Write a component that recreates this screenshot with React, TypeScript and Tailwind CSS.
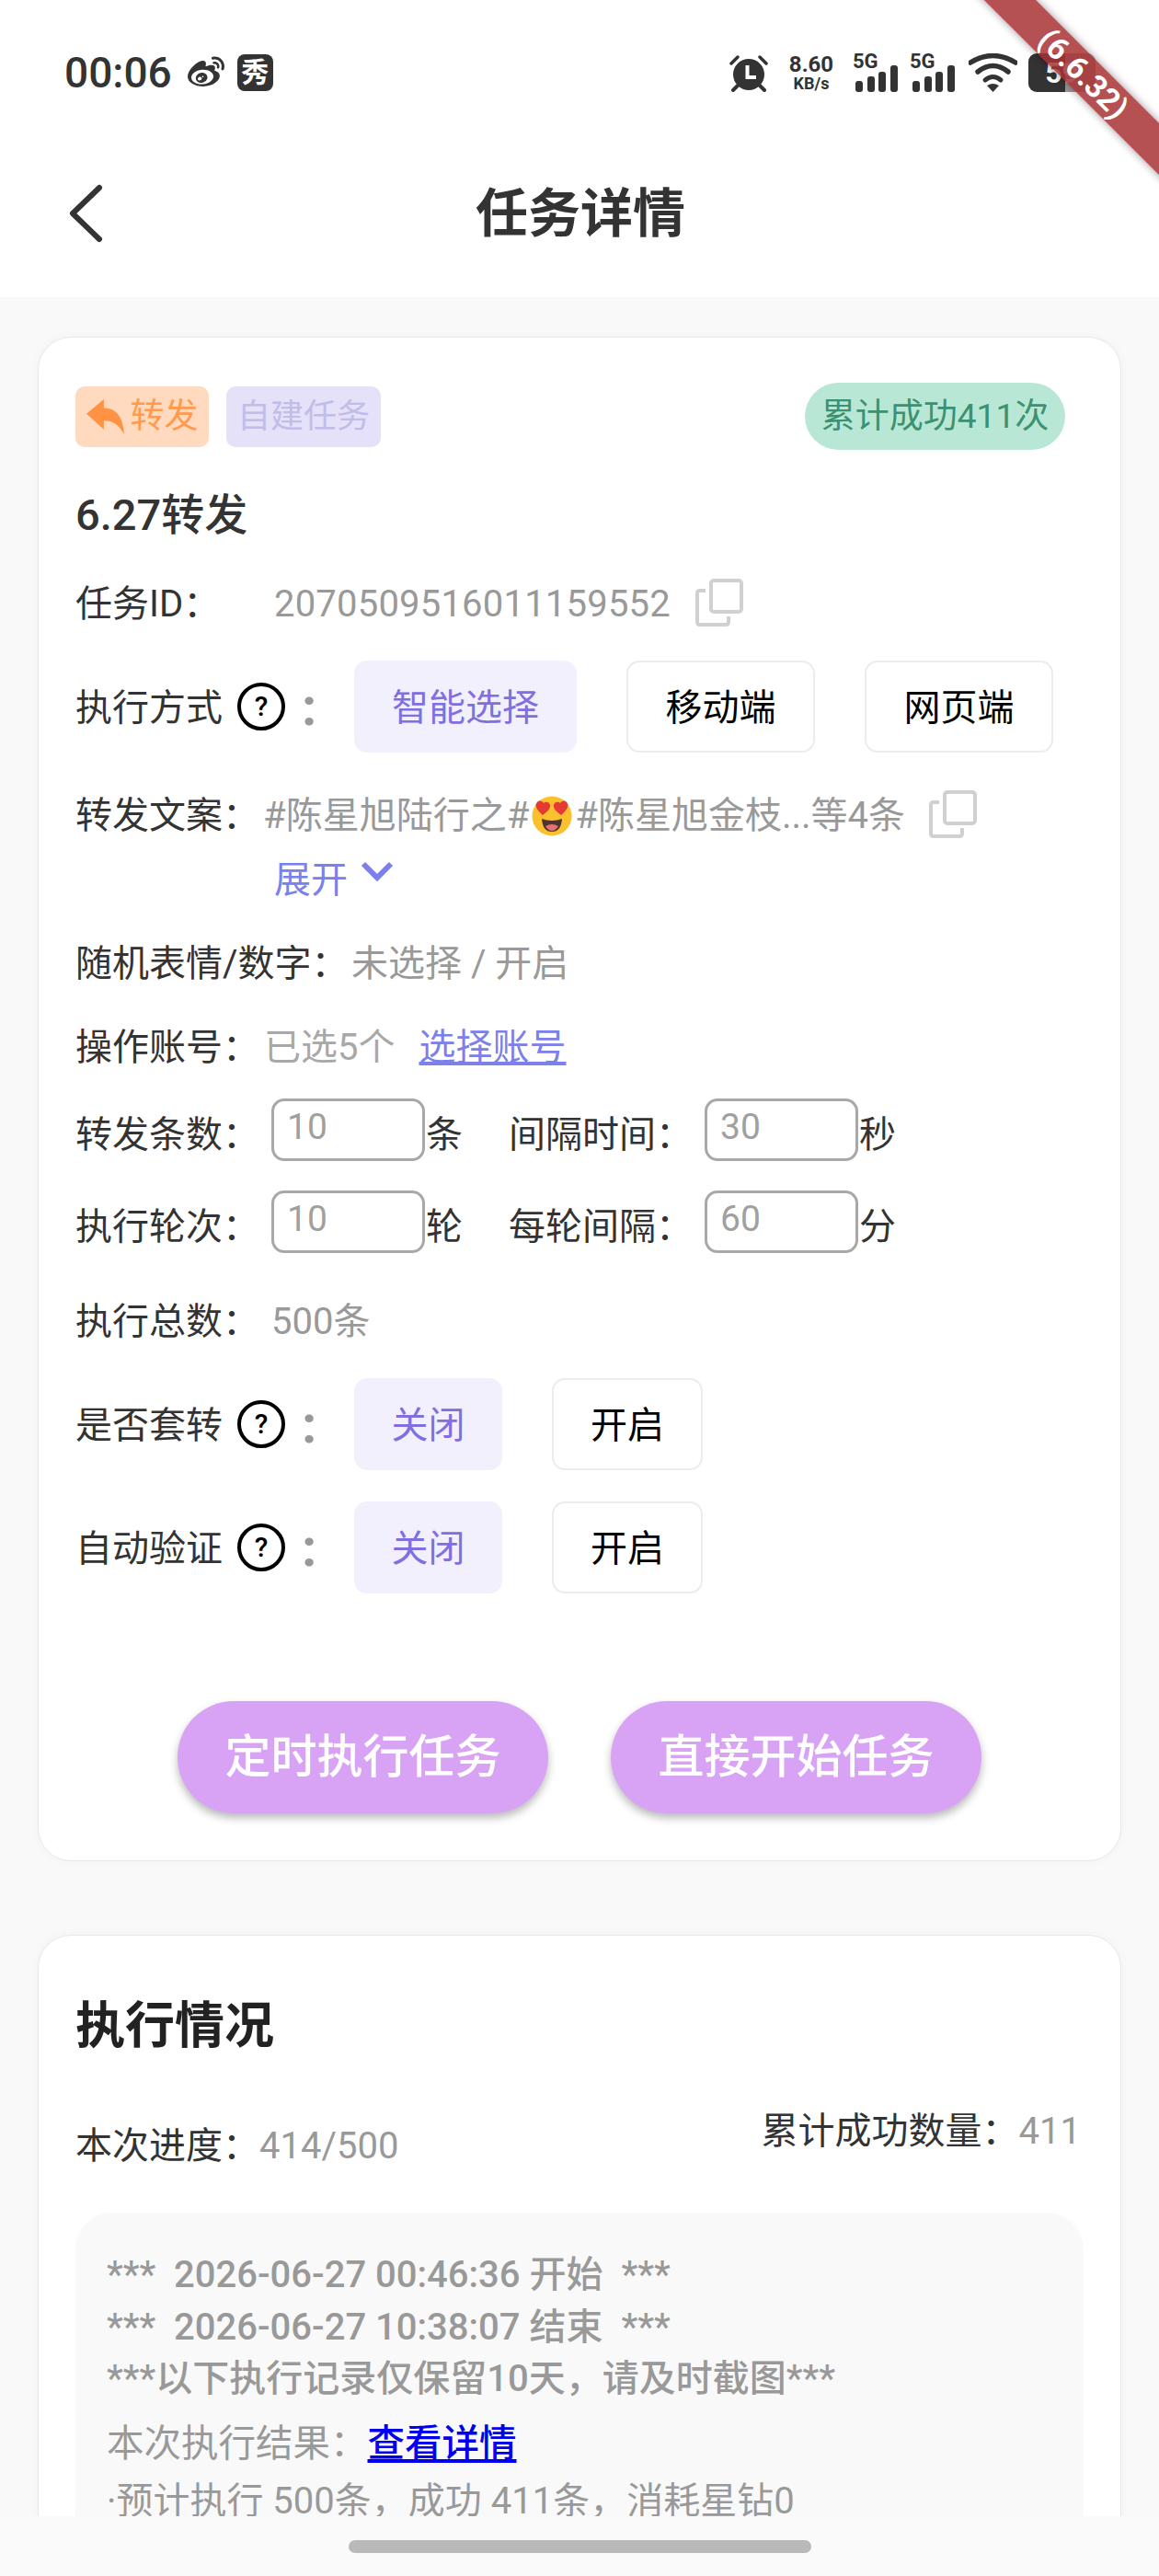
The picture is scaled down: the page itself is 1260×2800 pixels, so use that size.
import React from "react";
import { FaWeibo } from "react-icons/fa";

const font = { fontFamily: 'Roboto, "Noto Sans CJK SC", sans-serif' };

function Signal() {
  return (
    <svg width="50" height="42" viewBox="0 0 50 42" className="shrink-0">
      <text x="-1" y="16" fontSize="22" fontWeight="700" fill="#333" fontFamily="Roboto">5G</text>
      <rect x="2" y="30" width="8" height="12" rx="3" fill="#333" />
      <rect x="15" y="25" width="8" height="17" rx="3" fill="#333" />
      <rect x="27" y="20" width="8" height="22" rx="3" fill="#333" />
      <rect x="40" y="13" width="8" height="29" rx="3" fill="#333" />
    </svg>
  );
}

function Alarm() {
  return (
    <svg width="42" height="42" viewBox="0 0 42 42" className="shrink-0">
      <circle cx="21" cy="23" r="17" fill="#333" />
      <path d="M2 11 L9 4 M40 11 L33 4" stroke="#333" strokeWidth="3.5" strokeLinecap="round" />
      <path d="M9 35 L4 40 M33 35 L38 40" stroke="#333" strokeWidth="4" strokeLinecap="round" />
      <path d="M19.5 13 V26 H29" stroke="#fff" strokeWidth="4" fill="none" />
    </svg>
  );
}

function Wifi() {
  return (
    <svg width="53" height="42" viewBox="0 0 53 42" className="shrink-0">
      <path d="M2 10 Q26.5 -5 51 10" stroke="#333" strokeWidth="5.5" fill="none" strokeLinecap="round" />
      <path d="M10 20 Q26.5 7 43 20" stroke="#333" strokeWidth="5.5" fill="none" strokeLinecap="round" />
      <path d="M18 29 Q26.5 22 35 29" stroke="#333" strokeWidth="5" fill="none" strokeLinecap="round" />
      <path d="M20 35 Q26.5 31 33 35 L26.5 42 Z" fill="#333" />
    </svg>
  );
}

function Copy() {
  return (
    <svg width="52" height="52" viewBox="0 0 52 52" className="shrink-0">
      <rect x="17" y="2" width="33" height="34" rx="3" fill="none" stroke="#d0d0d0" strokeWidth="4" />
      <path d="M11 13 H5 Q2 13 2 16 V47 Q2 50 5 50 H33 Q36 50 36 47 V41" fill="none" stroke="#d0d0d0" strokeWidth="4" />
    </svg>
  );
}

function Help() {
  return (
    <span className="flex shrink-0 items-center !pt-0">
      <span className="ml-[16px] flex h-[52px] w-[52px] items-center justify-center rounded-full border-[4px] border-black bg-white text-[30px] font-medium leading-none text-black">?</span>
      <span className="ml-[18px] w-[20px] text-[58px] font-bold leading-none text-[#999]" style={{ fontFamily: "Roboto" }}>:</span>
    </span>
  );
}

function Emoji() {
  return (
    <svg width="44" height="44" viewBox="0 0 44 44" className="mx-[3px] shrink-0">
      <circle cx="22" cy="22" r="21.5" fill="#fbc02d" />
      <path d="M11 25 Q22 29 33 25 Q32 39 22 39 Q12 39 11 25 Z" fill="#4e342e" />
      <path d="M15 33 Q22 29 29 33 Q26 38 22 38 Q18 38 15 33 Z" fill="#e57373" />
      <path d="M12 21 C5 15 3 10 6 7 C9 4 12 6 13 8 C15 6 19 6 20 10 C21 14 16 18 12 21 Z" fill="#e53935" />
      <path d="M32 21 C39 15 41 10 38 7 C35 4 32 6 31 8 C29 6 25 6 24 10 C23 14 28 18 32 21 Z" fill="#e53935" />
    </svg>
  );
}

function Opt({ on, w, children }: { on?: boolean; w: string; children: React.ReactNode }) {
  return (
    <div className={`flex h-[100px] shrink-0 items-center justify-center rounded-[14px] pt-[4px] text-[40px] ${w} ${on ? "bg-[#f2f0fd] text-[#7f6fe0]" : "border-2 border-[#ececec] bg-white text-black"}`}>
      {children}
    </div>
  );
}

function Row({ className, children }: { className: string; children: React.ReactNode }) {
  return <div className={`flex items-center text-[40px] text-[#333] [&>span]:pt-[4px] ${className}`}>{children}</div>;
}

function Field({ v }: { v: string }) {
  return (
    <div className="flex h-[68px] w-[167px] shrink-0 rounded-[14px] border-[3px] border-[#a8a8a8] bg-white pl-[14px] text-[39px] leading-[56px] text-[#a0a0a0]">
      {v}
    </div>
  );
}

function Pair({ label, v, unit, w }: { label: string; v: string; unit: string; w: string }) {
  return (
    <>
      <span className={`shrink-0 pt-[11px] ${w}`}>{label}</span>
      <Field v={v} />
      <span className="shrink-0 pl-[1px] pt-[11px]">{unit}</span>
    </>
  );
}

export default function App() {
  return (
    <div className="relative h-[2800px] w-[1260px] overflow-hidden bg-[#f9f9f9]" style={font}>
      {/* header */}
      <div className="h-[323px] bg-white">
        <div className="flex h-[100px] items-start pt-[58px]">
          <div className="flex w-[793px] items-center pl-[70px]">
            <span className="text-[46px] font-medium leading-[42px] text-[#333]">00:06</span>
            <FaWeibo className="ml-[17px] text-[40px] text-[#333]" />
            <span className="ml-[14px] flex h-[40px] w-[39px] items-center justify-center rounded-[8px] bg-[#333] text-[30px] font-bold leading-none text-white">秀</span>
          </div>
          <Alarm />
          <div className="ml-[22px] flex w-[50px] shrink-0 flex-col items-center font-bold text-[#333]">
            <span className="text-[24px] leading-[24px]">8.60</span>
            <span className="text-[18px] leading-[18px]">KB/s</span>
          </div>
          <div className="ml-[21px]"><Signal /></div>
          <div className="ml-[12px]"><Signal /></div>
          <div className="ml-[13px]"><Wifi /></div>
          <div className="ml-[12px] flex h-[42px] w-[73px] items-center justify-center rounded-[9px] bg-[linear-gradient(90deg,#333_55%,#33333380_55%)] text-[32px] font-bold leading-none text-white">59</div>
        </div>
        <div className="mt-[100px] flex h-[64px] items-center">
          <svg width="40" height="64" viewBox="0 0 40 64" className="ml-[73px] shrink-0">
            <path d="M35 4 L6 32 L35 60" fill="none" stroke="#333" strokeWidth="6" strokeLinecap="round" strokeLinejoin="round" />
          </svg>
          <div className="ml-[404px] text-[57px] font-bold leading-none text-[#333]">任务详情</div>
        </div>
      </div>

      {/* main card */}
      <div className="ml-[41px] mt-[43px] w-[1178px] rounded-[36px] border border-[#e8e8e8] bg-white pb-[51px] pl-[40px] shadow-[0_0_12px_rgba(0,0,0,0.03)]">
        <div className="mt-[49px] flex h-[73px] items-center pr-[60px]">
          <div className="flex h-[66px] w-[145px] items-center justify-center rounded-[10px] bg-[#ffdabf] text-[37px] text-[#ff9a4f]">
            <svg width="42" height="38" viewBox="0 0 40 36" className="mr-[6px]">
              <path d="M0 15 L18 0 V9 C32 9 38 20 39 36 C33 26 28 22 18 22 V31 Z" fill="#ff9243" />
            </svg>
            <span>转发</span>
          </div>
          <div className="ml-[19px] flex h-[66px] w-[168px] items-center justify-center rounded-[10px] bg-[#e4e1f8] text-[36px] text-[#c1bdea]">自建任务</div>
          <div className="ml-auto flex h-[73px] w-[283px] items-center justify-center rounded-full bg-[#b9e7d5] text-[37px] text-[#3c9170]">累计成功411次</div>
        </div>

        <Row className="mt-[41px] h-[60px]"><span className="!pt-0 text-[47px] font-medium text-[#333]">6.27转发</span></Row>

        <Row className="mt-[35px] h-[60px]">
          <span className="w-[216px] shrink-0">任务ID：</span>
          <span className="tracking-[0.2px] text-[#999]">2070509516011159552</span>
          <span className="ml-[27px] !pt-0"><Copy /></span>
        </Row>

        <Row className="mt-[33px] h-[100px]">
          <span className="w-[160px] shrink-0">执行方式</span>
          <Help />
          <div className="ml-[37px] flex gap-[54px]">
            <Opt on w="w-[242px]">智能选择</Opt>
            <Opt w="w-[205px]">移动端</Opt>
            <Opt w="w-[205px]">网页端</Opt>
          </div>
        </Row>

        <Row className="mt-[37px] h-[60px]">
          <span className="w-[204px] shrink-0">转发文案：</span>
          <span className="flex items-center whitespace-nowrap text-[#999]">#陈星旭陆行之#<Emoji />#陈星旭金枝...等4条</span>
          <span className="ml-[26px] !pt-0"><Copy /></span>
        </Row>

        <Row className="mt-[10px] h-[60px] pl-[216px]">
          <span className="text-[#7b80ea]">展开</span>
          <svg width="36" height="24" viewBox="0 0 36 24" className="ml-[14px] -translate-y-[8px]">
            <path d="M3 4 L18 19 L33 4" fill="none" stroke="#7b80ea" strokeWidth="6" />
          </svg>
        </Row>

        <Row className="mt-[31px] h-[60px]">
          <span className="w-[300px] shrink-0">随机表情/数字：</span>
          <span className="text-[#999]">未选择 / 开启</span>
        </Row>

        <Row className="mt-[31px] h-[60px]">
          <span className="w-[205px] shrink-0">操作账号：</span>
          <span className="text-[#a8a8a8]">已选5个</span>
          <span className="ml-[26px] text-[#7b80ea] underline">选择账号</span>
        </Row>

        <Row className="mt-[27px] h-[68px] [&>span]:!pt-[11px]">
          <Pair label="转发条数：" v="10" unit="条" w="w-[213px]" />
          <div className="ml-[50px] flex h-[68px] items-center">
            <Pair label="间隔时间：" v="30" unit="秒" w="w-[213px]" />
          </div>
        </Row>

        <Row className="mt-[32px] h-[68px] [&>span]:!pt-[11px]">
          <Pair label="执行轮次：" v="10" unit="轮" w="w-[213px]" />
          <div className="ml-[50px] flex h-[68px] items-center">
            <Pair label="每轮间隔：" v="60" unit="分" w="w-[213px]" />
          </div>
        </Row>

        <Row className="mt-[43px] h-[60px]">
          <span className="w-[213px] shrink-0">执行总数：</span>
          <span className="text-[#999]">500条</span>
        </Row>

        <Row className="mt-[33px] h-[100px]">
          <span className="w-[160px] shrink-0">是否套转</span>
          <Help />
          <div className="ml-[37px] flex gap-[54px]">
            <Opt on w="w-[161px]">关闭</Opt>
            <Opt w="w-[164px]">开启</Opt>
          </div>
        </Row>

        <Row className="mt-[34px] h-[100px]">
          <span className="w-[160px] shrink-0">自动验证</span>
          <Help />
          <div className="ml-[37px] flex gap-[54px]">
            <Opt on w="w-[161px]">关闭</Opt>
            <Opt w="w-[164px]">开启</Opt>
          </div>
        </Row>

        <div className="ml-[111px] mt-[117px] flex gap-[68px]">
          <div className="flex h-[122px] w-[403px] items-center justify-center rounded-full bg-[#d9a3f5] text-[50px] font-medium text-white shadow-[0_5px_10px_rgba(0,0,0,0.28)]">定时执行任务</div>
          <div className="flex h-[122px] w-[403px] items-center justify-center rounded-full bg-[#d9a3f5] text-[50px] font-medium text-white shadow-[0_5px_10px_rgba(0,0,0,0.28)]">直接开始任务</div>
        </div>
      </div>

      {/* execution card */}
      <div className="ml-[41px] mt-[80px] w-[1178px] rounded-[36px] border border-[#e8e8e8] bg-white px-[40px] shadow-[0_0_12px_rgba(0,0,0,0.03)]">
        <div className="mt-[64px] h-[70px] text-[54px] font-bold leading-[70px] text-[#222]">执行情况</div>
        <div className="mt-[49px] flex h-[76px] justify-between pr-[3px] text-[40px] text-[#333]">
          <span className="self-end pt-[4px] leading-[60px]">本次进度：<span className="text-[#999]">414/500</span></span>
          <span className="self-start leading-[60px]">累计成功数量：<span className="text-[#999]">411</span></span>
        </div>
        <div className="mt-[42px] h-[600px] rounded-[40px] bg-[#f9f9f9] pl-[34px] pt-[40px] text-[#999]">
          <div className="whitespace-pre text-[40px] font-medium leading-[56.5px]">{"***  2026-06-27 00:46:36 开始  ***"}</div>
          <div className="whitespace-pre text-[40px] font-medium leading-[56.5px]">{"***  2026-06-27 10:38:07 结束  ***"}</div>
          <div className="whitespace-pre text-[40px] font-medium leading-[56.5px]">***以下执行记录仅保留10天，请及时截图***</div>
          <div className="mt-[11px] text-[40.5px] leading-[60px]">本次执行结果：<span className="font-medium text-[#0000ee] underline">查看详情</span></div>
          <div className="mt-[3px] text-[40px] leading-[60px]">·预计执行 500条，成功 411条，消耗星钻0</div>
        </div>
      </div>

      {/* gesture bar */}
      <div className="absolute bottom-0 left-0 flex h-[65px] w-full justify-center bg-[#fafafa] pt-[26px]">
        <div className="h-[14px] w-[503px] rounded-full bg-[#b9b9b9]" />
      </div>

      {/* debug ribbon */}
      <div className="absolute left-[978px] top-[60px] flex h-[40px] w-[400px] rotate-45 items-center justify-center bg-[#a83234]/85 text-[34px] font-bold leading-none text-white shadow-[0_0_10px_rgba(0,0,0,0.4)]">(6.6.32)</div>
    </div>
  );
}
